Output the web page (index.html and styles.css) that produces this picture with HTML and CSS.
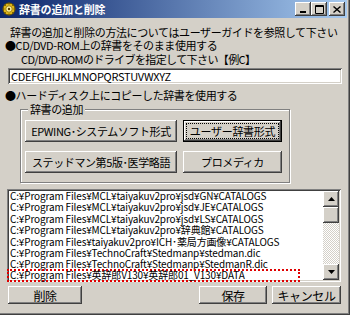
FILE: index.html
```html
<!DOCTYPE html>
<html lang="ja">
<head>
  <meta charset="UTF-8" />
  <title>辞書の追加と削除</title>
  <link rel="stylesheet" href="styles.css">
</head>
<body>
  <div class="window">
    <!-- Title bar -->
    <div class="titlebar">
      <svg class="app-icon" width="14" height="14" viewBox="0 0 14 14">
        <circle cx="7" cy="7" r="6" fill="#e0b818" stroke="#6a5200" stroke-width="1"/>
        <circle cx="7" cy="7" r="3.2" fill="#fff2a0" stroke="#8a6a00" stroke-width="0.8"/>
        <circle cx="7" cy="7" r="1.2" fill="#5a4000"/>
        <path d="M7 0.5v2M7 11.5v2M0.5 7h2M11.5 7h2M2.4 2.4l1.4 1.4M10.2 10.2l1.4 1.4M2.4 11.6l1.4-1.4M10.2 3.8l1.4-1.4" stroke="#6a5200" stroke-width="1"/>
      </svg>
      <span class="title">辞書の追加と削除</span>
      <div class="caption-btns">
        <span class="cap-btn">
          <svg width="8" height="7" viewBox="0 0 8 7"><rect x="1" y="5" width="6" height="2" fill="#000"/></svg>
        </span>
        <span class="cap-btn">
          <svg width="9" height="9" viewBox="0 0 9 9"><path d="M0.5 0.5h8v8h-8z M0.5 1.5h8" fill="none" stroke="#000"/></svg>
        </span>
        <span class="cap-btn close">
          <svg width="8" height="7" viewBox="0 0 8 7"><path d="M0.5 0.5l7 6M7.5 0.5l-7 6" stroke="#000" stroke-width="1.4"/></svg>
        </span>
      </div>
    </div>

    <div class="client">
      <p class="intro">辞書の追加と削除の方法についてはユーザーガイドを参照して下さい</p>
      <p class="option">●CD/DVD-ROM上の辞書をそのまま使用する</p>
      <p class="hint">CD/DVD-ROMのドライブを指定して下さい【例C】</p>
      <div class="drive-field">CDEFGHIJKLMNOPQRSTUVWXYZ</div>
      <p class="option option-hd">●ハードディスク上にコピーした辞書を使用する</p>

      <fieldset class="group">
        <legend>辞書の追加</legend>
        <div class="group-btns">
          <button class="btn">EPWING･システムソフト形式</button>
          <button class="btn btn-default"><span class="focus">ユーザー辞書形式</span></button>
          <button class="btn">ステッドマン第5版･医学略語</button>
          <button class="btn">プロメディカ</button>
        </div>
      </fieldset>

      <div class="listbox">
        <ul class="dict-list">
          <li>C:¥Program Files¥MCL¥taiyakuv2pro¥jsd¥GN¥CATALOGS</li>
          <li>C:¥Program Files¥MCL¥taiyakuv2pro¥jsd¥JE¥CATALOGS</li>
          <li>C:¥Program Files¥MCL¥taiyakuv2pro¥jsd¥LS¥CATALOGS</li>
          <li>C:¥Program Files¥MCL¥taiyakuv2pro¥辞典館¥CATALOGS</li>
          <li>C:¥Program Files¥taiyakuv2pro¥ICH･薬局方画像¥CATALOGS</li>
          <li>C:¥Program Files¥TechnoCraft¥Stedmanp¥stedman.dic</li>
          <li>C:¥Program Files¥TechnoCraft¥Stedmanp¥StedmanR.dic</li>
          <li><span class="marked">C:¥Program Files¥英辞郎V130¥英辞郎01_V130¥DATA</span></li>
        </ul>
        <div class="scrollbar">
          <span class="sb-btn">
            <svg width="7" height="4" viewBox="0 0 7 4"><path d="M3.5 0L7 4H0z" fill="#000"/></svg>
          </span>
          <span class="sb-thumb"></span>
          <span class="sb-track"></span>
          <span class="sb-btn">
            <svg width="7" height="4" viewBox="0 0 7 4"><path d="M0 0h7L3.5 4z" fill="#000"/></svg>
          </span>
        </div>
      </div>

      <div class="actions">
        <button class="btn btn-delete">削除</button>
        <button class="btn btn-save">保存</button>
        <button class="btn btn-cancel">キャンセル</button>
      </div>
    </div>
  </div>
</body>
</html>
```

FILE: styles.css
```css
/* Windows 2000 classic dialog look */
body {
  margin: 0;
  background: #d4d0c8;
  font-family: "MS UI Gothic", "Noto Sans CJK JP", sans-serif;
  font-size: 11px;
  letter-spacing: -0.4px;
  color: #000;
}
.window {
  width: 350px;
  height: 315px;
  box-sizing: border-box;
  background: #d4d0c8;
  box-shadow: inset -1px -1px #404040, inset -2px -2px #808080;
  overflow: hidden;
}

/* Title bar */
.titlebar {
  height: 18px;
  margin-right: 3px;
  display: flex;
  align-items: center;
  padding-left: 2px;
  background: linear-gradient(to right, #0a246a, #a6caf0);
}
.app-icon {
  flex: none;
}
.title {
  margin-left: 3px;
  color: #fff;
  font-weight: bold;
  font-size: 11px;
  letter-spacing: -0.2px;
}
.caption-btns {
  margin-left: auto;
  margin-right: 2px;
  display: flex;
}
.cap-btn {
  width: 16px;
  height: 14px;
  box-sizing: border-box;
  display: flex;
  align-items: center;
  justify-content: center;
  background: #d4d0c8;
  box-shadow: inset -1px -1px #404040, inset 1px 1px #fff, inset -2px -2px #808080;
}
.cap-btn.close {
  margin-left: 2px;
}

/* Client area text */
.client p {
  margin: 0;
  line-height: 13px;
  white-space: nowrap;
}
.client .intro {
  margin: 8px 0 0 10px;
}
.client .option {
  margin-left: 5px;
}
.client .hint {
  margin: 1px 0 0 21px;
  letter-spacing: -0.6px;
}
.client .option-hd {
  margin-top: 5px;
}
.drive-field {
  margin: 2px 0 0 8px;
  width: 334px;
  height: 16px;
  box-sizing: border-box;
  padding: 2px 0 0 3px;
  line-height: 12px;
  background: #fff;
  box-shadow: inset 1px 1px #808080, inset -1px -1px #fff, inset 2px 2px #404040, inset -2px -2px #d4d0c8;
  letter-spacing: -0.3px;
}

/* Group box */
.group {
  margin: 1px 0 0 20px;
  width: 270px;
  box-sizing: border-box;
  padding: 4px 4px 9px 4px;
  border: 1px solid #808080;
  box-shadow: inset 1px 1px #fff, 1px 1px #fff;
}
.group legend {
  margin-left: 3px;
  padding: 0 2px;
  line-height: 13px;
  background: #d4d0c8;
}
.group-btns {
  display: grid;
  grid-template-columns: 152px 99px;
  column-gap: 6px;
  row-gap: 9px;
}

/* Buttons */
.btn {
  height: 22px;
  padding: 0;
  border: none;
  background: #d4d0c8;
  font: inherit;
  letter-spacing: inherit;
  color: #000;
  white-space: nowrap;
  box-shadow: inset -1px -1px #404040, inset 1px 1px #fff, inset -2px -2px #808080;
}
.btn-default {
  border: 1px solid #000;
  padding: 2px;
}
.btn-default .focus {
  height: 16px;
  display: flex;
  align-items: center;
  justify-content: center;
  box-sizing: border-box;
  border: 1px dotted #000;
  line-height: 12px;
  letter-spacing: -0.3px;
}

/* List box */
.listbox {
  margin: 6px 0 0 7px;
  width: 334px;
  height: 93px;
  box-sizing: border-box;
  padding: 1px 2px 2px 2px;
  display: flex;
  background: #fff;
  box-shadow: inset 1px 1px #808080, inset -1px -1px #fff, inset 2px 2px #404040, inset -2px -2px #d4d0c8;
}
.dict-list {
  flex: 1;
  margin: 0;
  padding: 0 0 0 1px;
  list-style: none;
  white-space: nowrap;
  font-size: 10px;
}
.dict-list li {
  height: 11.4px;
  line-height: 11.4px;
  letter-spacing: -0.15px;
}
.marked {
  display: inline-block;
  vertical-align: top;
  width: 293px;
  height: 13px;
  box-sizing: border-box;
  margin: -1px 0 0 -3px;
  padding-left: 1px;
  line-height: 8px;
  border: 2px dotted #e00000;
}
.scrollbar {
  width: 16px;
  margin-top: 1px;
  display: flex;
  flex-direction: column;
  background: repeating-conic-gradient(#fff 0 25%, #d4d0c8 0 50%) 0 0 / 2px 2px;
}
.sb-btn, .sb-thumb {
  flex: none;
  height: 16px;
  display: flex;
  align-items: center;
  justify-content: center;
  background: #d4d0c8;
  box-shadow: inset -1px -1px #404040, inset 1px 1px #fff, inset -2px -2px #808080;
}
.sb-track {
  flex: 1;
}

/* Bottom buttons */
.actions {
  display: flex;
  margin: 4px 0 0 8px;
}
.actions .btn {
  height: 18px;
  font-size: 12px;
}
.btn-delete {
  width: 74px;
}
.btn-save {
  width: 68px;
  margin-left: auto;
}
.btn-cancel {
  width: 69px;
  margin: 0 9px 0 5px;
}
```
